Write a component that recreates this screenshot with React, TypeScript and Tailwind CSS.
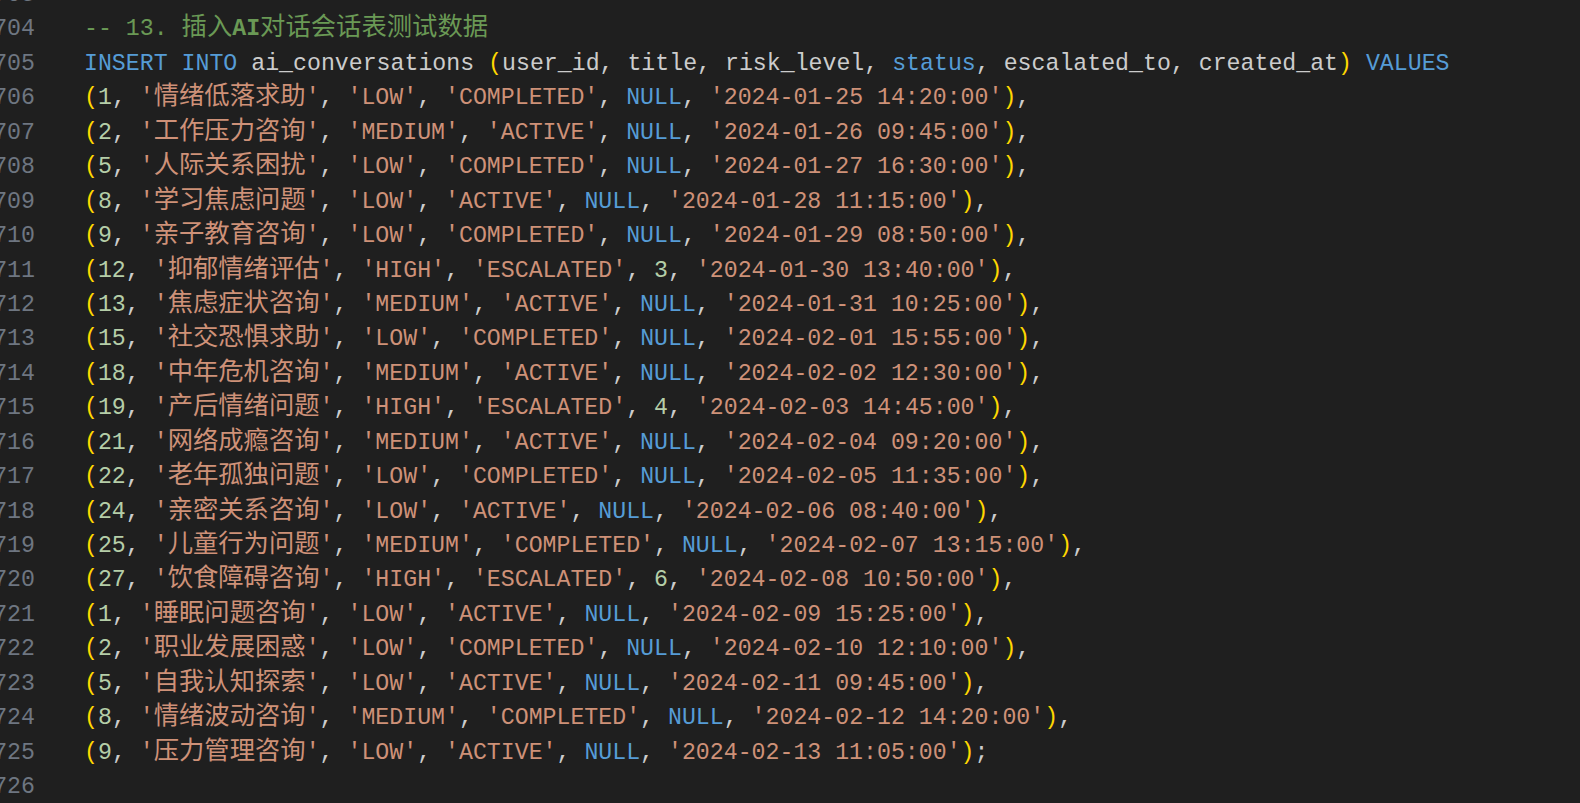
import React from "react";

type Row = [string, string, string, string, string, string];

const rows: Row[] = [
  ["1", "情绪低落求助", "LOW", "COMPLETED", "NULL", "2024-01-25 14:20:00"],
  ["2", "工作压力咨询", "MEDIUM", "ACTIVE", "NULL", "2024-01-26 09:45:00"],
  ["5", "人际关系困扰", "LOW", "COMPLETED", "NULL", "2024-01-27 16:30:00"],
  ["8", "学习焦虑问题", "LOW", "ACTIVE", "NULL", "2024-01-28 11:15:00"],
  ["9", "亲子教育咨询", "LOW", "COMPLETED", "NULL", "2024-01-29 08:50:00"],
  ["12", "抑郁情绪评估", "HIGH", "ESCALATED", "3", "2024-01-30 13:40:00"],
  ["13", "焦虑症状咨询", "MEDIUM", "ACTIVE", "NULL", "2024-01-31 10:25:00"],
  ["15", "社交恐惧求助", "LOW", "COMPLETED", "NULL", "2024-02-01 15:55:00"],
  ["18", "中年危机咨询", "MEDIUM", "ACTIVE", "NULL", "2024-02-02 12:30:00"],
  ["19", "产后情绪问题", "HIGH", "ESCALATED", "4", "2024-02-03 14:45:00"],
  ["21", "网络成瘾咨询", "MEDIUM", "ACTIVE", "NULL", "2024-02-04 09:20:00"],
  ["22", "老年孤独问题", "LOW", "COMPLETED", "NULL", "2024-02-05 11:35:00"],
  ["24", "亲密关系咨询", "LOW", "ACTIVE", "NULL", "2024-02-06 08:40:00"],
  ["25", "儿童行为问题", "MEDIUM", "COMPLETED", "NULL", "2024-02-07 13:15:00"],
  ["27", "饮食障碍咨询", "HIGH", "ESCALATED", "6", "2024-02-08 10:50:00"],
  ["1", "睡眠问题咨询", "LOW", "ACTIVE", "NULL", "2024-02-09 15:25:00"],
  ["2", "职业发展困惑", "LOW", "COMPLETED", "NULL", "2024-02-10 12:10:00"],
  ["5", "自我认知探索", "LOW", "ACTIVE", "NULL", "2024-02-11 09:45:00"],
  ["8", "情绪波动咨询", "MEDIUM", "COMPLETED", "NULL", "2024-02-12 14:20:00"],
  ["9", "压力管理咨询", "LOW", "ACTIVE", "NULL", "2024-02-13 11:05:00"],
];

const Cjk = ({ children }: { children: React.ReactNode }) => (
  <span className="text-[25.33px] leading-[20px] font-['Noto_Sans_CJK_SC',sans-serif]">{children}</span>
);

const P = ({ children }: { children: React.ReactNode }) => (
  <span className="text-[#ffd700]">{children}</span>
);
const S = ({ children }: { children: React.ReactNode }) => (
  <span className="text-[#ce9178]">{children}</span>
);
const K = ({ children }: { children: React.ReactNode }) => (
  <span className="text-[#569cd6]">{children}</span>
);
const N = ({ children }: { children: React.ReactNode }) => (
  <span className="text-[#b5cea8]">{children}</span>
);

const Line = ({ num, children }: { num: number; children?: React.ReactNode }) => (
  <div className="flex h-[34.44px] leading-[34.44px] whitespace-pre">
    <div className="-ml-[7px] w-[42px] shrink-0 text-right text-[#6e7681]">{num}</div>
    <div className="ml-[49px] text-[#cccccc]">{children}</div>
  </div>
);

const DataRow = ({ r, last }: { r: Row; last: boolean }) => (
  <>
    <P>(</P>
    <N>{r[0]}</N>
    {", "}
    <S>
      {"'"}
      <Cjk>{r[1]}</Cjk>
      {"'"}
    </S>
    {", "}
    <S>{`'${r[2]}'`}</S>
    {", "}
    <S>{`'${r[3]}'`}</S>
    {", "}
    {r[4] === "NULL" ? <K>NULL</K> : <N>{r[4]}</N>}
    {", "}
    <S>{`'${r[5]}'`}</S>
    <P>)</P>
    {last ? ";" : ","}
  </>
);

export default function App() {
  return (
    <div className="h-[803px] w-full overflow-hidden bg-[#1f1f1f] font-['Liberation_Mono',monospace] text-[23.22px]">
      <div className="-mt-[22px] flex flex-col">
        <Line num={703} />
        <Line num={704}>
          <span className="text-[#6a9955]">
            {"-- 13. "}
            <Cjk>插入</Cjk>
            <span className="font-bold leading-[20px]">AI</span>
            <Cjk>对话会话表测试数据</Cjk>
          </span>
        </Line>
        <Line num={705}>
          <K>INSERT INTO</K>
          {" ai_conversations "}
          <P>(</P>
          {"user_id, title, risk_level, "}
          <K>status</K>
          {", escalated_to, created_at"}
          <P>)</P>
          {" "}
          <K>VALUES</K>
        </Line>
        {rows.map((r, i) => (
          <Line key={i} num={706 + i}>
            <DataRow r={r} last={i === rows.length - 1} />
          </Line>
        ))}
        <Line num={726} />
      </div>
    </div>
  );
}
